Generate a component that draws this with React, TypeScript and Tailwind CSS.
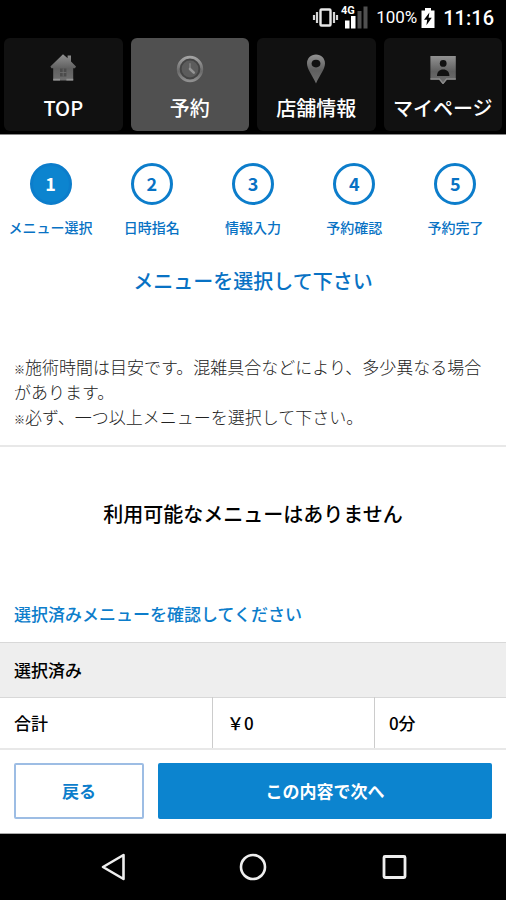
import type { ReactNode } from "react";

const steps = ["メニュー選択", "日時指名", "情報入力", "予約確認", "予約完了"];

function IconGradient({ id }: { id: string }) {
  return (
    <defs>
      <linearGradient id={id} x1="0" y1="0" x2="0" y2="1">
        <stop offset="0" stopColor="#929292" />
        <stop offset="0.55" stopColor="#5f5f5f" />
        <stop offset="1" stopColor="#6e6e6e" />
      </linearGradient>
    </defs>
  );
}

function HouseIcon() {
  return (
    <svg width="32" height="32" viewBox="0 0 32 32" aria-hidden="true">
      <IconGradient id="house" />
      <path
        fill="url(#house)"
        d="M16 2.2l4.600 4V3.400h3.400v6.200l5 5-1 1.600h-1.800v12.200H6.200V16.200H4.400l-1-1.600z"
      />
      <path fill="#4c4c4c" d="M13 16.500h6.400v8H13z" />
      <path stroke="#707070" strokeWidth="0.8" d="M16.200 16.500v8M13 20.500h6.400" />
      <path stroke="#929292" strokeWidth="1.600" d="M6.200 27.600H13M19.400 27.600h6.800" />
    </svg>
  );
}

function ClockIcon() {
  return (
    <svg width="32" height="32" viewBox="0 0 32 32" aria-hidden="true">
      <defs>
        <linearGradient id="clock" x1="0" y1="0" x2="0" y2="1">
          <stop offset="0" stopColor="#a3a3a3" />
          <stop offset="0.6" stopColor="#6a6a6a" />
          <stop offset="1" stopColor="#8f8f8f" />
        </linearGradient>
      </defs>
      <circle cx="16" cy="17" r="11.800" fill="#444" stroke="url(#clock)" strokeWidth="2.800" />
      <circle cx="16" cy="17" r="8.400" fill="#5c5c5c" />
      <path fill="none" stroke="#7c7c7c" strokeWidth="1.800" strokeLinecap="round" d="M16 12v5" />
      <path fill="none" stroke="#949494" strokeWidth="2.600" strokeLinecap="round" d="M16 17l3.800 3.600" />
    </svg>
  );
}

function PinIcon() {
  return (
    <svg width="32" height="32" viewBox="0 0 32 32" aria-hidden="true">
      <IconGradient id="pin" />
      <path
        fill="url(#pin)"
        d="M16 2.400c5.200 0 9 3.800 9 9 0 5.400-5 11.200-9 20-4-8.800-9-14.600-9-20 0-5.200 3.800-9 9-9z"
      />
      <ellipse cx="16" cy="11.600" rx="4.400" ry="3.800" fill="#111" />
    </svg>
  );
}

function MemberIcon() {
  return (
    <svg width="32" height="32" viewBox="0 0 32 32" aria-hidden="true">
      <IconGradient id="member" />
      <path fill="url(#member)" d="M3.400 4h25.400v23.600h-9L16 32.400l-3.800-4.800H3.400z" />
      <circle cx="16.200" cy="11.400" r="3.400" fill="#111" />
      <path fill="#111" d="M10 24c0-4 2.400-6.400 6.200-6.400s6.200 2.400 6.200 6.400z" />
      <path fill="none" stroke="#8a8a8a" strokeWidth="1.400" d="M3.400 27h9l3.600 4.400 3.600-4.400h9.200" />
    </svg>
  );
}

const tabs: { label: string; icon: ReactNode; active?: boolean }[] = [
  { label: "TOP", icon: <HouseIcon /> },
  { label: "予約", icon: <ClockIcon />, active: true },
  { label: "店舗情報", icon: <PinIcon /> },
  { label: "マイページ", icon: <MemberIcon /> },
];

function StatusBar() {
  return (
    <div className="flex h-9 items-center justify-end pr-3 text-white">
      <svg width="56" height="26" viewBox="0 0 56 26" className="mr-2" aria-hidden="true">
        <rect x="8.500" y="4.500" width="10" height="16" rx="1" fill="none" stroke="#e8e8e8" strokeWidth="2.400" />
        <path
          fill="none"
          stroke="#d5d5d5"
          strokeWidth="2.200"
          d="M5 7v11M22 7v11M2 10v5M25 10v5"
        />
        <path fill="#fff" d="M33 15.500h4.500v8H33zM39 11h4.500v12.500H39z" />
        <path fill="#505050" d="M45.500 6h4v17.500h-4zM51.500 1.500h4v22h-4z" />
        <text
          x="29"
          y="9"
          fontSize="11"
          fontWeight="700"
          fill="#fff"
          stroke="#000"
          strokeWidth="2"
          paintOrder="stroke"
          fontFamily="Roboto, sans-serif"
        >
          4G
        </text>
      </svg>
      <span className="text-[17px]">100%</span>
      <svg width="14" height="20" viewBox="0 0 14 20" className="ml-1" aria-hidden="true">
        <path fill="#fff" d="M4 0h6v2.400h3.500V20H.5V2.400H4z" />
        <path fill="#000" d="M8.400 4.600L3 11.800h3.200l-.8 5.400 5.400-7.400H7.600z" />
      </svg>
      <span className="ml-2 text-xl font-medium">11:16</span>
    </div>
  );
}

function SystemNav() {
  return (
    <nav className="grid flex-1 grid-cols-[1fr_140px_1fr] items-center bg-black px-11 py-4 text-[#eee]">
      <button type="button" aria-label="Back" className="mr-12 justify-self-end">
        <svg width="44" height="32" viewBox="0 0 44 32" aria-hidden="true">
          <path fill="none" stroke="currentColor" strokeWidth="2.600" strokeLinejoin="round" d="M32.500 4v24L12 16z" />
        </svg>
      </button>
      <button type="button" aria-label="Home" className="justify-self-center">
        <svg width="32" height="32" viewBox="0 0 32 32" aria-hidden="true">
          <circle cx="16" cy="16" r="12" fill="none" stroke="currentColor" strokeWidth="2.600" />
        </svg>
      </button>
      <button type="button" aria-label="Recents" className="ml-14 justify-self-start">
        <svg width="32" height="32" viewBox="0 0 32 32" aria-hidden="true">
          <rect x="5" y="5.500" width="21" height="21" rx="1" fill="none" stroke="currentColor" strokeWidth="2.800" />
        </svg>
      </button>
    </nav>
  );
}

export default function App() {
  return (
    <div className="flex min-h-screen flex-col bg-white font-[Roboto,'Noto_Sans_CJK_JP',sans-serif] text-black">
      <header className="border-b border-[#888] bg-black pb-[3px]">
        <StatusBar />
        <nav className="grid grid-cols-4 gap-2 px-1 pt-0.5">
          {tabs.map((tab) => (
            <a
              key={tab.label}
              href="#"
              className={`flex h-[93px] flex-col items-center rounded-md pt-3.5 font-['Noto_Sans_CJK_JP',sans-serif] text-xl font-medium text-white ${
                tab.active ? "bg-[#505050]" : "bg-[#111]"
              }`}
            >
              <span className="flex h-8 items-center">{tab.icon}</span>
              <span className="mt-2.5 leading-7 whitespace-nowrap">{tab.label}</span>
            </a>
          ))}
        </nav>
      </header>

      <main className="font-['Noto_Sans_CJK_JP',sans-serif]">
        <ol className="grid grid-cols-5 pt-7 text-[#0872c4]">
          {steps.map((step, index) => (
            <li key={step} className="flex flex-col items-center">
              <span
                className={`flex size-[42px] items-center justify-center rounded-full border-[3px] border-[#0c7dcb] pb-0.5 text-lg font-bold ${
                  index === 0 ? "bg-[#0c84cf] text-white" : ""
                }`}
              >
                {index + 1}
              </span>
              <span className="mt-3 text-sm leading-5 font-medium whitespace-nowrap">{step}</span>
            </li>
          ))}
        </ol>

        <h1 className="mt-[30px] text-center text-xl leading-7 font-medium text-[#0872c4]">
          メニューを選択して下さい
        </h1>

        <div className="mt-[59px] border-b-2 border-[#e8e8e8] px-3.5 pb-4 text-[17px] leading-[25px] font-light text-[#222]">
          <p>
            <span className="text-[11px] leading-none font-medium">※</span>
            施術時間は目安です。混雑具合などにより、多少異なる場合があります。
          </p>
          <p>
            <span className="text-[11px] leading-none font-medium">※</span>
            必ず、一つ以上メニューを選択して下さい。
          </p>
        </div>

        <p className="mt-[53px] text-center text-xl leading-7 font-medium">利用可能なメニューはありません</p>

        <h2 className="mt-[74px] px-3.5 text-[17px] leading-6 font-medium text-[#0c7dcb]">
          選択済みメニューを確認してください
        </h2>

        <table className="mt-4 w-full table-fixed border-collapse text-left text-[17px] leading-6 font-medium">
          <colgroup>
            <col className="w-[42%]" />
            <col className="w-[32%]" />
            <col className="w-[26%]" />
          </colgroup>
          <thead>
            <tr className="h-[55px] border-y border-[#d8d8d8] bg-[#eee]">
              <th colSpan={3} className="px-3.5 font-medium">
                選択済み
              </th>
            </tr>
          </thead>
          <tbody>
            <tr className="h-[51px] border-b-2 border-[#e8e8e8]">
              <th className="px-3.5 font-medium">合計</th>
              <td className="border-l border-[#ccc] px-3.5">￥0</td>
              <td className="border-l border-[#ccc] px-3.5">0分</td>
            </tr>
          </tbody>
        </table>

        <div className="flex gap-3.5 border-b border-[#aaa] px-3.5 pt-[13px] pb-3.5 text-[17px] font-bold">
          <button type="button" className="h-14 w-[130px] rounded-xs border-2 border-[#9dbde4] text-[#0c7dcb]">
            戻る
          </button>
          <button type="button" className="h-14 flex-1 rounded-xs bg-[#0c84cf] text-white">
            この内容で次へ
          </button>
        </div>
      </main>

      <SystemNav />
    </div>
  );
}
